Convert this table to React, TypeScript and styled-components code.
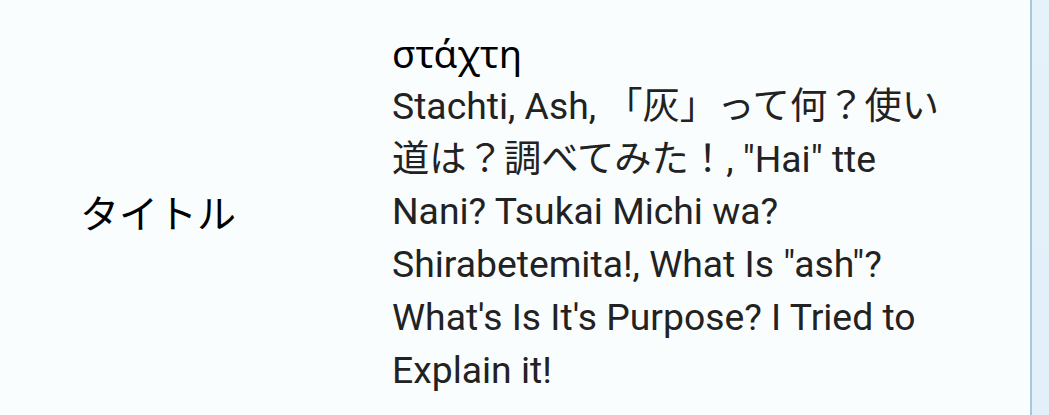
import React from "react";
import styled, { createGlobalStyle } from "styled-components";

const Global = createGlobalStyle`
  html, body {
    margin: 0;
    padding: 0;
    background: #fafdfd;
  }
  body {
    font-family: Roboto, "Noto Sans CJK JP", sans-serif;
  }
`;

const Page = styled.div`
  display: flex;
  width: 1049px;
  height: 415px;
  overflow: hidden;
`;

const Panel = styled.main`
  width: 1032px;
  flex: none;
  box-sizing: border-box;
  background: #fafdfd;
  border-right: 2px solid #a8c8d9;
`;

const Side = styled.aside`
  flex: 1;
  background: linear-gradient(180deg, #e4f2fa 0%, #e2f1f9 100%);
`;

const Row = styled.div`
  display: grid;
  grid-template-columns: 392px 566px;
  align-items: center;
  padding-top: 27px;
`;

const Label = styled.div`
  padding-left: 80px;
  font-family: "Noto Sans CJK JP", sans-serif;
  font-size: 39px;
  line-height: 53px;
  color: #000;
`;

const Value = styled.div`
  font-family: Roboto, "Noto Sans CJK JP", sans-serif;
  font-size: 37.3px;
  line-height: 52.8px;
  color: #222;
`;

const Primary = styled.div`
  font-family: "Noto Sans", Roboto, sans-serif;
  font-size: 38.4px;
  color: #000;
`;

const Secondary = styled.div`
  color: #222;
`;

export default function App() {
  return (
    <>
      <Global />
      <Page>
        <Panel>
          <Row>
            <Label>タイトル</Label>
            <Value>
              <Primary>στάχτη</Primary>
              <Secondary>
                Stachti, Ash, 「灰」って何？使い道は？調べてみた！, "Hai" tte Nani? Tsukai Michi wa? Shirabetemita!, What Is "ash"? What's Is It's Purpose? I Tried to Explain it!
              </Secondary>
            </Value>
          </Row>
        </Panel>
        <Side />
      </Page>
    </>
  );
}
